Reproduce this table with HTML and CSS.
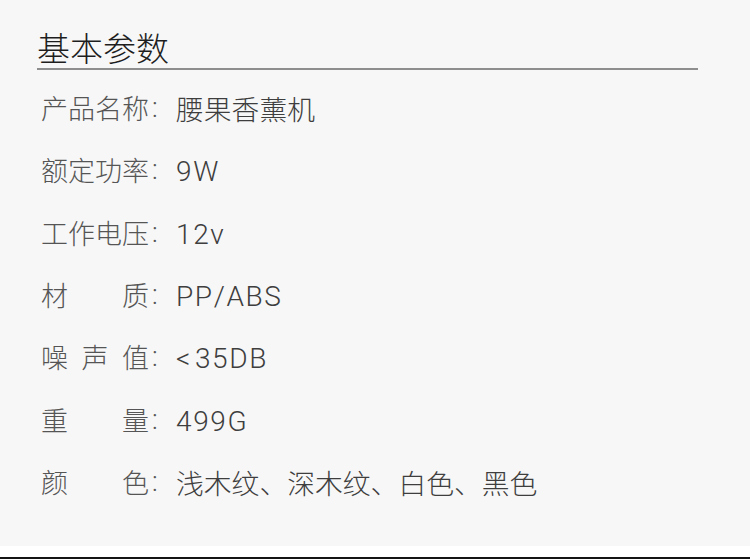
FILE: index.html
```html
<!DOCTYPE html>
<html lang="zh-CN">
<head>
<meta charset="utf-8">
<title>基本参数</title>
<link rel="stylesheet" href="styles.css">
</head>
<body>
<div class="page">
  <section class="specs">
    <h2 class="title">基本参数</h2>
    <div class="rows">
      <div class="row"><span class="label">产品名称</span><span class="colon">:</span><span class="value">腰果香薰机</span></div>
      <div class="row"><span class="label">额定功率</span><span class="colon">:</span><span class="value latin">9W</span></div>
      <div class="row"><span class="label">工作电压</span><span class="colon">:</span><span class="value latin">12v</span></div>
      <div class="row"><span class="label">材质</span><span class="colon">:</span><span class="value latin">PP/ABS</span></div>
      <div class="row"><span class="label">噪声值</span><span class="colon">:</span><span class="value latin"><span class="lt">&lt;</span>35DB</span></div>
      <div class="row"><span class="label">重量</span><span class="colon">:</span><span class="value latin">499G</span></div>
      <div class="row"><span class="label">颜色</span><span class="colon">:</span><span class="value">浅木纹、深木纹、白色、黑色</span></div>
    </div>
  </section>
  <div class="gap"></div>
  <div class="edge"></div>
</div>
</body>
</html>
```

FILE: styles.css
```css
* { box-sizing: border-box; }
html, body { margin: 0; padding: 0; background: #ffffff; }
body { font-family: "Noto Sans CJK SC", "Noto Sans", sans-serif; font-weight: 300; }
.page { width: 750px; height: 559px; display: flex; flex-direction: column; overflow: hidden; }
.specs { height: 546px; background: #f7f7f7; padding: 27px 52px 0 37px; }
.title {
  margin: 0;
  font-size: 33px;
  line-height: 41px;
  font-weight: 300;
  color: #1e1e1e;
  border-bottom: 2px solid #8e8e8e;
}
.rows { margin-top: 7px; padding-left: 4px; }
.row {
  display: grid;
  grid-template-columns: 108px 27px 1fr;
  height: 62.3px;
  align-items: center;
  line-height: 40px;
}
.label {
  font-size: 27px;
  color: #555555;
  text-align: justify;
  text-align-last: justify;
}
.colon { font-family: Roboto, sans-serif; font-size: 27px; color: #555555; padding-left: 3px; }
.value {
  font-family: "Noto Sans CJK SC", sans-serif;
  font-size: 27.8px;
  color: #3e3e3e;
}
.latin {
  font-family: Roboto, "Noto Sans CJK SC", sans-serif;
  font-size: 28px;
  letter-spacing: 1.6px;
  padding-top: 4px;
}
.lt { margin-right: 3px; }
.gap { height: 11px; background: #ffffff; }
.edge { height: 2px; background: #141414; }
```
